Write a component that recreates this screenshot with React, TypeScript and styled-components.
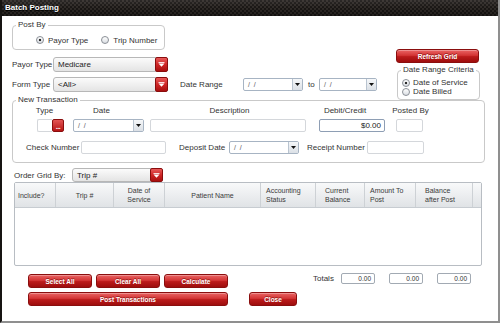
import React from 'react'
import styled, { createGlobalStyle } from 'styled-components'

const GlobalStyle = createGlobalStyle`
  html, body {
    margin: 0;
    padding: 0;
    background: #fff;
  }
  body {
    font-family: "Liberation Sans", Arial, sans-serif;
    font-size: 8px;
    color: #333;
  }
  * {
    box-sizing: border-box;
  }
`

const Window = styled.div`
  width: 500px;
  height: 323px;
  display: flex;
  flex-direction: column;
  background: #fff;
  border-left: 2px solid #161412;
  border-right: 2px solid #8f8f8f;
  border-bottom: 2px solid #8f8f8f;
`

const TitleBar = styled.div`
  height: 16px;
  flex: none;
  padding-left: 3px;
  line-height: 16px;
  color: #fff;
  font-weight: bold;
  font-size: 8px;
  text-shadow: 0 1px 0 #000;
  background:
    linear-gradient(to bottom, rgba(255, 255, 255, 0.08), rgba(0, 0, 0, 0) 45%, rgba(0, 0, 0, 0.3)),
    linear-gradient(45deg, #1a1715 25%, transparent 25%, transparent 75%, #1a1715 75%) 0 0 / 4px 4px,
    linear-gradient(45deg, #1a1715 25%, #302b28 25%, #302b28 75%, #1a1715 75%) 2px 2px / 4px 4px;
`

const Body = styled.div`
  flex: 1;
  display: flex;
  flex-direction: column;
  padding: 5px 0 0 10px;
`

const TopSection = styled.div`
  display: flex;
  align-items: flex-start;
`

const LeftCol = styled.div`
  width: 384px;
  display: flex;
  flex-direction: column;
`

const RightCol = styled.div`
  width: 84px;
  display: flex;
  flex-direction: column;
`

const Group = styled.fieldset<{ $w: number; $pull?: number }>`
  margin: ${(p) => (p.$pull ? `-${p.$pull}px` : '0')} 0 0 0;
  padding: 0;
  min-width: 0;
  width: ${(p) => p.$w}px;
  border: 1px solid #c9c9c9;
  border-radius: 4px;
`

const CriteriaGroup = styled(Group)`
  margin: 3px 0 0 1px;
`

const Legend = styled.legend`
  margin-left: 3px;
  padding: 0 2px;
  line-height: 8px;
  font-size: 8px;
  color: #333;
`

const RadioRow = styled.div`
  display: flex;
  align-items: center;
  padding: 5px 0 3px 23px;
`

const RadioStack = styled.div`
  display: flex;
  flex-direction: column;
  padding: 4px 0 3px 4px;
`

const Option = styled.label<{ $gap: number; $after?: number; $h?: number }>`
  display: flex;
  align-items: center;
  gap: ${(p) => p.$gap}px;
  height: ${(p) => p.$h || 12}px;
  margin-right: ${(p) => p.$after || 0}px;
  white-space: nowrap;
`

const RadioDot = styled.span<{ $on?: boolean }>`
  width: 8px;
  height: 8px;
  flex: none;
  border-radius: 50%;
  border: 1px solid #8a8f96;
  background: ${(p) =>
    p.$on
      ? 'radial-gradient(circle, #2a2a2a 0, #2a2a2a 1.2px, transparent 1.6px), linear-gradient(#ffffff, #d9dde2)'
      : 'linear-gradient(#ffffff, #d9dde2)'};
`

const FieldRow = styled.div<{ $mt: number }>`
  display: flex;
  align-items: center;
  margin-top: ${(p) => p.$mt}px;
`

const Label = styled.span<{ $w: number; $ml?: number }>`
  width: ${(p) => p.$w}px;
  margin-left: ${(p) => p.$ml || 0}px;
  flex: none;
  white-space: nowrap;
`

const SelectBox = styled.div<{ $w: number; $h?: number }>`
  width: ${(p) => p.$w}px;
  height: ${(p) => p.$h || 15}px;
  flex: none;
  display: flex;
  border: 1px solid #b7b7b7;
  border-radius: 3px;
  background: linear-gradient(#fbfbfb, #e4e4e4);
`

const SelectText = styled.span`
  flex: 1;
  padding-left: 4px;
  display: flex;
  align-items: center;
  color: #222;
`

const RedKnob = styled.span`
  width: 13px;
  margin: -1px -1px -1px 0;
  display: flex;
  align-items: center;
  justify-content: center;
  border: 1px solid #8a0d0d;
  border-radius: 2px;
  background: linear-gradient(#e75a5a 0%, #cf2626 50%, #a90f0f 100%);
`

const DateBox = styled.div<{ $w: number }>`
  width: ${(p) => p.$w}px;
  height: 13px;
  flex: none;
  display: flex;
  border: 1px solid #a7b4c3;
  border-radius: 2px;
  background: #fff;
`

const DateText = styled.span`
  flex: 1;
  padding-left: 4px;
  display: flex;
  align-items: center;
  white-space: pre;
  color: #555;
  font-size: 7px;
`

const DateDrop = styled.span`
  width: 10px;
  display: flex;
  align-items: center;
  justify-content: center;
  border-left: 1px solid #b9c4d0;
  background: linear-gradient(#f5f7f9, #dbe0e6);
`

const TextBox = styled.div<{ $w?: number; $strong?: boolean }>`
  width: ${(p) => (p.$w ? `${p.$w}px` : '100%')};
  height: 13px;
  flex: none;
  display: flex;
  align-items: center;
  justify-content: flex-end;
  padding-right: 3px;
  border: 1px solid ${(p) => (p.$strong ? '#8e9eb4' : '#d4d7db')};
  border-radius: 2px;
  background: #fff;
  color: #222;
`

const RedButton = styled.button<{ $w?: number; $wide?: boolean }>`
  height: 14px;
  width: ${(p) => (p.$w ? `${p.$w}px` : 'auto')};
  grid-column: ${(p) => (p.$wide ? '1 / -1' : 'auto')};
  padding: 0;
  border: 1px solid #8a0e0e;
  border-radius: 3px;
  background: linear-gradient(#ea6464 0%, #d33535 45%, #bb1b1b 55%, #9e0d0d 100%);
  box-shadow: inset 0 1px 0 rgba(255, 255, 255, 0.3);
  color: #fff;
  font-family: "Liberation Sans", Arial, sans-serif;
  font-weight: bold;
  font-size: 6.5px;
  text-shadow: 0 -1px 0 rgba(90, 0, 0, 0.5);
  cursor: pointer;
`

const RefreshButton = styled(RedButton)`
  margin-top: 28px;
`

const TransRow = styled.div`
  display: flex;
  padding-top: 2px;
`

const TransField = styled.div<{ $w: number; $ml: number }>`
  width: ${(p) => p.$w}px;
  margin-left: ${(p) => p.$ml}px;
  display: flex;
  flex-direction: column;
`

const TransHead = styled.div<{ $l?: number; $r?: number }>`
  height: 10px;
  line-height: 10px;
  margin-bottom: 3px;
  display: flex;
  justify-content: center;
  white-space: nowrap;
  padding-left: ${(p) => p.$l || 0}px;
  padding-right: ${(p) => p.$r || 0}px;
`

const TypeCombo = styled.div`
  display: flex;
  height: 13px;
`

const TypeInput = styled.div`
  width: 15px;
  border: 1px solid #d4d7db;
  border-right: none;
  border-radius: 2px 0 0 2px;
  background: #fff;
`

const DotsKnob = styled.span`
  width: 12px;
  display: flex;
  align-items: center;
  justify-content: center;
  padding-top: 1px;
  border: 1px solid #8a0e0e;
  border-radius: 2px;
  background: linear-gradient(#e45555, #b51414);
  color: #fff;
  font-size: 7px;
  font-weight: bold;
  line-height: 7px;
  letter-spacing: -0.5px;
`

const CheckRow = styled.div`
  display: flex;
  align-items: center;
  margin-top: 9px;
  padding: 0 0 8px 13px;
`

const OrderRow = styled.div`
  display: flex;
  align-items: center;
  margin: 5px 0 0 2px;
`

const Grid = styled.div`
  width: 468px;
  height: 84px;
  margin-left: 2px;
  display: flex;
  flex-direction: column;
  border: 1px solid #b8bdc3;
  border-radius: 2px;
`

const GridHead = styled.div`
  height: 25px;
  display: grid;
  grid-template-columns: 41px 58px 51px 96px 55px 49px 51px 57px 1fr;
  border-bottom: 1px solid #c7ccd1;
  background: linear-gradient(#f8f9fa, #e0e3e6);
  font-size: 7px;
  color: #3a3a3a;
`

const HeadCell = styled.div<{ $align: 'left' | 'center'; $pad: number; $last?: boolean }>`
  display: flex;
  align-items: center;
  justify-content: ${(p) => (p.$align === 'center' ? 'center' : 'flex-start')};
  text-align: ${(p) => p.$align};
  padding-left: ${(p) => p.$pad}px;
  line-height: 9px;
  border-right: ${(p) => (p.$last ? 'none' : '1px solid #cdd1d5')};
`

const Bottom = styled.div`
  display: flex;
  margin-top: 6px;
`

const ButtonGrid = styled.div`
  display: grid;
  grid-template-columns: repeat(3, 64px);
  gap: 4px;
  margin: 2px 0 0 16px;
`

const CloseWrap = styled.div`
  align-self: flex-end;
  margin-left: 21px;
`

const Totals = styled.div`
  display: flex;
  align-items: center;
  height: 12px;
  margin-left: 16px;
  gap: 14px;
`

const TotalsLabel = styled.span`
  width: 22px;
  margin-right: -8px;
`

const TotalBox = styled.div`
  width: 34px;
  height: 11px;
  display: flex;
  align-items: center;
  justify-content: flex-end;
  padding-right: 3px;
  border: 1px solid #a2aab3;
  border-radius: 2px;
  font-size: 6.5px;
  color: #333;
`

const WhiteArrow = () => (
  <svg width="7" height="5" viewBox="0 0 7 5">
    <rect x="0.5" y="0" width="6" height="1" fill="#fff" opacity="0.85" />
    <polygon points="0.5,1.5 6.5,1.5 3.5,4.8" fill="#fff" />
  </svg>
)

const BlackArrow = () => (
  <svg width="5" height="3" viewBox="0 0 5 3">
    <polygon points="0,0 5,0 2.5,3" fill="#111" />
  </svg>
)

const Select = ({ w, h, value }: { w: number; h?: number; value: string }) => (
  <SelectBox $w={w} $h={h}>
    <SelectText>{value}</SelectText>
    <RedKnob>
      <WhiteArrow />
    </RedKnob>
  </SelectBox>
)

const DateField = ({ w }: { w: number }) => (
  <DateBox $w={w}>
    <DateText>{'/  /'}</DateText>
    <DateDrop>
      <BlackArrow />
    </DateDrop>
  </DateBox>
)

const columns = [
  { key: 'inc', lines: ['Include?'], align: 'left' as const, pad: 3 },
  { key: 'trip', lines: ['Trip #'], align: 'center' as const, pad: 0 },
  { key: 'dos', lines: ['Date of', 'Service'], align: 'center' as const, pad: 0 },
  { key: 'pat', lines: ['Patient Name'], align: 'center' as const, pad: 0 },
  { key: 'acc', lines: ['Accounting', 'Status'], align: 'left' as const, pad: 5 },
  { key: 'cur', lines: ['Current', 'Balance'], align: 'left' as const, pad: 9 },
  { key: 'amt', lines: ['Amount To', 'Post'], align: 'left' as const, pad: 5 },
  { key: 'bal', lines: ['Balance', 'after Post'], align: 'left' as const, pad: 9 },
]

export default function App() {
  return (
    <>
      <GlobalStyle />
      <Window>
        <TitleBar>Batch Posting</TitleBar>
        <Body>
          <TopSection>
            <LeftCol>
              <Group $w={153}>
                <Legend>Post By</Legend>
                <RadioRow>
                  <Option $gap={4} $after={13}>
                    <RadioDot $on />
                    Payor Type
                  </Option>
                  <Option $gap={4}>
                    <RadioDot />
                    Trip Number
                  </Option>
                </RadioRow>
              </Group>

              <FieldRow $mt={7}>
                <Label $w={41}>Payor Type</Label>
                <Select w={115} value="Medicare" />
              </FieldRow>

              <FieldRow $mt={5}>
                <Label $w={41}>Form Type</Label>
                <Select w={115} value="<All>" />
                <Label $w={63} $ml={12}>Date Range</Label>
                <DateField w={60} />
                <Label $w={11} $ml={5}>to</Label>
                <DateField w={58} />
              </FieldRow>
            </LeftCol>

            <RightCol>
              <RefreshButton $w={83}>Refresh Grid</RefreshButton>
              <CriteriaGroup $w={83}>
                <Legend>Date Range Criteria</Legend>
                <RadioStack>
                  <Option $gap={3} $h={9}>
                    <RadioDot $on />
                    Date of Service
                  </Option>
                  <Option $gap={3} $h={9}>
                    <RadioDot />
                    Date Billed
                  </Option>
                </RadioStack>
              </CriteriaGroup>
            </RightCol>
          </TopSection>

          <Group $w={473} $pull={4}>
            <Legend>New Transaction</Legend>
            <TransRow>
              <TransField $w={27} $ml={24}>
                <TransHead $r={12}>Type</TransHead>
                <TypeCombo>
                  <TypeInput />
                  <DotsKnob>...</DotsKnob>
                </TypeCombo>
              </TransField>
              <TransField $w={71} $ml={9}>
                <TransHead $r={14}>Date</TransHead>
                <DateField w={71} />
              </TransField>
              <TransField $w={156} $ml={6}>
                <TransHead $l={3}>Description</TransHead>
                <TextBox />
              </TransField>
              <TransField $w={66} $ml={13}>
                <TransHead $r={14}>Debit/Credit</TransHead>
                <TextBox $strong>$0.00</TextBox>
              </TransField>
              <TransField $w={27} $ml={11}>
                <TransHead $l={2}>Posted By</TransHead>
                <TextBox />
              </TransField>
            </TransRow>
            <CheckRow>
              <Label $w={55}>Check Number</Label>
              <TextBox $w={85} />
              <Label $w={50} $ml={13}>Deposit Date</Label>
              <DateField w={70} />
              <Label $w={60} $ml={8}>Receipt Number</Label>
              <TextBox $w={57} />
            </CheckRow>
          </Group>

          <OrderRow>
            <Label $w={58}>Order Grid By:</Label>
            <Select w={91} h={14} value="Trip #" />
          </OrderRow>

          <Grid>
            <GridHead>
              {columns.map((c) => (
                <HeadCell key={c.key} $align={c.align} $pad={c.pad}>
                  <div>
                    {c.lines.map((l) => (
                      <div key={l}>{l}</div>
                    ))}
                  </div>
                </HeadCell>
              ))}
              <HeadCell $align="left" $pad={0} $last />
            </GridHead>
          </Grid>

          <Bottom>
            <ButtonGrid>
              <RedButton>Select All</RedButton>
              <RedButton>Clear All</RedButton>
              <RedButton>Calculate</RedButton>
              <RedButton $wide>Post Transactions</RedButton>
            </ButtonGrid>
            <CloseWrap>
              <RedButton $w={48}>Close</RedButton>
            </CloseWrap>
            <Totals>
              <TotalsLabel>Totals</TotalsLabel>
              <TotalBox>0.00</TotalBox>
              <TotalBox>0.00</TotalBox>
              <TotalBox>0.00</TotalBox>
            </Totals>
          </Bottom>
        </Body>
      </Window>
    </>
  )
}
